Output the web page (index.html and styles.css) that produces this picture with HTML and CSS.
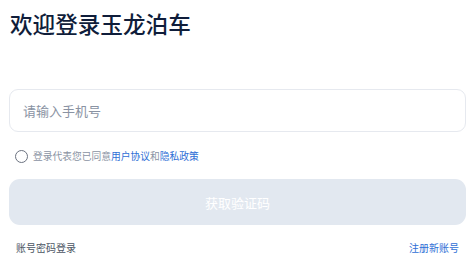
FILE: index.html
```html
<!DOCTYPE html>
<html lang="zh-CN">
<head>
<meta charset="utf-8">
<title>欢迎登录玉龙泊车</title>
<link rel="stylesheet" href="styles.css">
</head>
<body>
<main class="page">
  <h1 class="title">欢迎登录玉龙泊车</h1>
  <div class="field">
    <input class="input" type="text" placeholder="请输入手机号">
  </div>
  <div class="agree">
    <span class="radio"></span>
    <span class="agree-text">登录代表您已同意<a class="link">用户协议</a>和<a class="link">隐私政策</a></span>
  </div>
  <button class="btn" type="button">获取验证码</button>
  <div class="bottom">
    <span class="alt">账号密码登录</span>
    <span class="link">注册新账号</span>
  </div>
</main>
</body>
</html>
```
FILE: styles.css
```css
* { box-sizing: border-box; }
html, body { margin: 0; padding: 0; background: #ffffff; }
body {
  font-family: "Noto Sans CJK SC", "Noto Sans", sans-serif;
}
.page {
  padding: 9px 4px 0 9px;
  display: flex;
  flex-direction: column;
}
.title {
  margin: 0 0 0 1px;
  font-size: 22.6px;
  line-height: 30px;
  font-weight: 500;
  color: #0f1d3a;
}
.field { margin-top: 50px; }
.input {
  display: block;
  width: 100%;
  height: 43px;
  border: 1px solid #e6e9ef;
  border-radius: 9px;
  padding: 0 13px;
  font-family: inherit;
  font-size: 13px;
  color: #333;
  background: #fff;
  outline: none;
}
.input::placeholder { color: #8a93a3; }
.agree {
  display: flex;
  align-items: center;
  margin-top: 16px;
  padding-left: 6px;
  height: 16px;
}
.radio {
  width: 13px;
  height: 13px;
  border: 1.2px solid #6b7280;
  border-radius: 50%;
  margin-right: 5px;
}
.agree-text {
  font-size: 9.75px;
  line-height: 14px;
  color: #8a93a3;
}
.link { color: #2f6fd6; }
.btn {
  margin-top: 15px;
  height: 46px;
  width: 100%;
  border: none;
  border-radius: 11px;
  background: #e2e8f0;
  color: #ffffff;
  font-family: inherit;
  font-size: 13px;
}
.bottom {
  display: flex;
  justify-content: space-between;
  margin-top: 16px;
  padding: 0 7px 0 7px;
  font-size: 10px;
  line-height: 14px;
}
.alt { color: #4b5563; }
```
